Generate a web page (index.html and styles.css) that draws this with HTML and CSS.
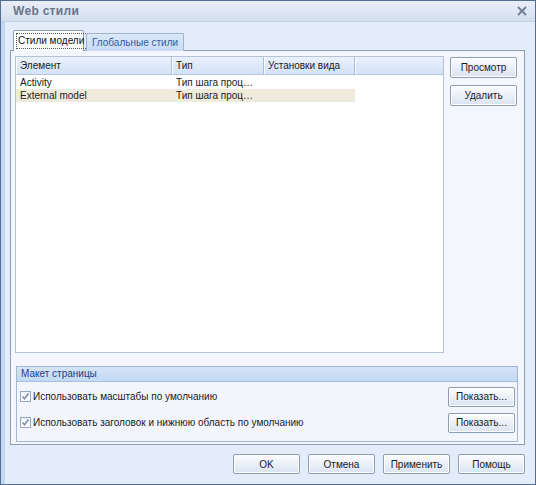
FILE: index.html
```html
<!DOCTYPE html>
<html lang="ru">
<head>
<meta charset="utf-8">
<title>Web стили</title>
<link rel="stylesheet" href="styles.css">
</head>
<body>
<div class="window">
  <div class="titlebar">
    <span class="title">Web стили</span>
    <svg class="close" width="10" height="10" viewBox="0 0 10 10"><path d="M1 1 L9 9 M9 1 L1 9" stroke="#6f7d90" stroke-width="1.8" fill="none"/></svg>
  </div>
  <div class="body">
    <div class="tabs">
      <div class="tab active"><span class="focus">Стили модели</span></div>
      <div class="tab">Глобальные стили</div>
    </div>
    <div class="panel">
      <div class="top">
        <div class="list">
          <div class="lhead">
            <div class="hc c1">Элемент</div>
            <div class="hc c2">Тип</div>
            <div class="hc c3">Установки вида</div>
            <div class="hc c4"></div>
          </div>
          <div class="rows">
            <div class="row">
              <div class="cell c1">Activity</div>
              <div class="cell c2">Тип шага проц…</div>
              <div class="cell c3"></div>
            </div>
            <div class="row sel">
              <div class="cell c1">External model</div>
              <div class="cell c2">Тип шага проц…</div>
              <div class="cell c3"></div>
            </div>
          </div>
        </div>
        <div class="side">
          <button class="btn side-btn">Просмотр</button>
          <button class="btn side-btn">Удалить</button>
        </div>
      </div>
      <div class="group">
        <div class="ghead">Макет страницы</div>
        <div class="grow">
          <span class="chk"><svg width="9" height="9" viewBox="0 0 9 9"><path d="M1.5 4.5 L3.5 6.8 L7.5 1.5" stroke="#7d8ea6" stroke-width="1.6" fill="none"/></svg></span>
          <span class="glabel">Использовать масштабы по умолчанию</span>
          <button class="btn show-btn">Показать...</button>
        </div>
        <div class="grow">
          <span class="chk"><svg width="9" height="9" viewBox="0 0 9 9"><path d="M1.5 4.5 L3.5 6.8 L7.5 1.5" stroke="#7d8ea6" stroke-width="1.6" fill="none"/></svg></span>
          <span class="glabel">Использовать заголовок и нижнюю область по умолчанию</span>
          <button class="btn show-btn">Показать...</button>
        </div>
      </div>
    </div>
    <div class="footer">
      <button class="btn foot-btn">OK</button>
      <button class="btn foot-btn">Отмена</button>
      <button class="btn foot-btn">Применить</button>
      <button class="btn foot-btn">Помощь</button>
    </div>
  </div>
</div>
</body>
</html>
```
FILE: styles.css
```css
* { box-sizing: border-box; }
html, body { margin: 0; padding: 0; }
body {
  font-family: "Liberation Sans", Arial, sans-serif;
  font-size: 10px;
  color: #1a1a1a;
  background: #ffffff;
}
.window {
  width: 536px;
  height: 485px;
  border: 1px solid #566c91;
  background: #d9e6f6;
  display: flex;
  flex-direction: column;
}
.titlebar {
  height: 21px;
  background: linear-gradient(#e9eff8, #d3dfef);
  border-bottom: 1px solid #c4d3e8;
  display: flex;
  align-items: center;
  justify-content: space-between;
  padding: 0 8px 0 12px;
}
.title {
  font-weight: bold;
  font-size: 12px;
  color: #66768c;
  letter-spacing: 0.3px;
}
.close { display: block; }
.body {
  flex: 1;
  display: flex;
  flex-direction: column;
  padding: 8px 10px 0 9px;
  background: linear-gradient(90deg, #c3d6ef 0, #c3d6ef 4px, #e3edf9 4px);
}
.tabs {
  display: flex;
  align-items: flex-end;
  height: 21px;
  margin-left: 3px;
  position: relative;
  z-index: 1;
  margin-bottom: -1px;
}
.tab {
  height: 18px;
  padding: 0 5px 0 5px;
  display: flex;
  align-items: center;
  border: 1px solid #9fb3cf;
  border-bottom: none;
  background: linear-gradient(#dbe8f8, #c7dbf4);
  color: #2e5c9e;
  margin-left: 2px;
  border-radius: 2px 2px 0 0;
}
.tab.active {
  width: 71px;
  height: 21px;
  background: #ffffff;
  color: #111;
  margin-left: 0;
  padding: 0 0 0 2px;
  border-color: #8e9fb6;
}
.focus {
  border: 1px dotted #555;
  padding: 1px 3px 2px 1px;
  white-space: nowrap;
}
.panel {
  height: 395px;
  border: 1px solid #8e9fb6;
  background: #f3f7fd;
  padding: 5px 6px 0 4px;
  display: flex;
  flex-direction: column;
}
.top {
  display: flex;
  gap: 6px;
}
.list {
  width: 429px;
  height: 297px;
  border: 1px solid #b4c3d6;
  background: #ffffff;
}
.lhead {
  display: flex;
  height: 18px;
  background: linear-gradient(#eaf1fb, #d3e2f5);
  border-bottom: 1px solid #b3c6e0;
}
.hc {
  display: flex;
  align-items: center;
  padding-left: 4px;
  border-right: 1px solid #aac0dc;
  box-shadow: inset 1px 0 0 #ffffff;
  color: #1a1a1a;
}
.c1 { width: 156px; }
.c2 { width: 92px; }
.c3 { width: 91px; }
.c4 { flex: 1; border-right: none; }
.rows { padding-top: 1px; }
.row {
  display: flex;
  height: 13px;
  line-height: 13px;
}
.cell {
  padding-left: 4px;
  white-space: nowrap;
  overflow: hidden;
}
.row.sel .cell { background: #eeebdc; }
.side {
  display: flex;
  flex-direction: column;
  gap: 7px;
  padding-top: 1px;
}
.btn {
  font-family: "Liberation Sans", Arial, sans-serif;
  font-size: 10px;
  color: #1a1a1a;
  border: 1px solid #8d9db3;
  border-radius: 2px;
  background: linear-gradient(#fbfcfe, #e9eff7 55%, #d9e3f0);
  box-shadow: inset 0 0 0 1px #ffffff;
  padding: 0;
  margin: 0;
  cursor: default;
}
.side-btn { width: 67px; height: 21px; }
.group {
  margin: 13px 0 0 1px;
  height: 76px;
  border: 1px solid #a3b8d6;
  background: #f2f6fc;
}
.ghead {
  height: 15px;
  background: linear-gradient(#d5e4f7, #c3d8f3);
  border-bottom: 1px solid #a9bfdd;
  color: #1f3f7c;
  padding-left: 4px;
  line-height: 14px;
}
.grow {
  display: flex;
  align-items: center;
  height: 19px;
  margin-top: 5px;
  padding: 0 2px 0 3px;
}
.grow + .grow { margin-top: 7px; }
.chk {
  width: 11px;
  height: 11px;
  border: 1px solid #96a8c2;
  background: linear-gradient(#eef2f7, #ffffff);
  display: flex;
  align-items: center;
  justify-content: center;
  margin-right: 2px;
}
.chk svg { display: block; }
.glabel { flex: 1; color: #1a1a1a; }
.show-btn { width: 67px; height: 20px; }
.footer {
  display: flex;
  justify-content: flex-end;
  gap: 8px;
  padding-top: 9px;
}
.foot-btn { width: 67px; height: 20px; }
```
